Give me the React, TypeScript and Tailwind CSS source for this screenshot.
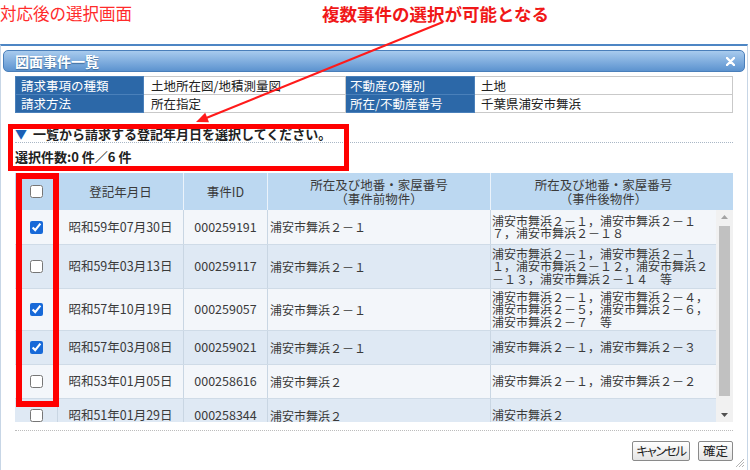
import React from "react";

const rows = [
  {
    checked: true,
    date: "昭和59年07月30日",
    id: "000259191",
    before: "浦安市舞浜２－１",
    after: ["浦安市舞浜２－１，浦安市舞浜２－１", "７，浦安市舞浜２－１８"],
    h: "h-[35px]",
    bg: "bg-[#f3f6fa]",
  },
  {
    checked: false,
    date: "昭和59年03月13日",
    id: "000259117",
    before: "浦安市舞浜２－１",
    after: [
      "浦安市舞浜２－１，浦安市舞浜２－１",
      "１，浦安市舞浜２－１２，浦安市舞浜２",
      "－１３，浦安市舞浜２－１４　等",
    ],
    h: "h-[44px]",
    bg: "bg-[#dfe9f4]",
  },
  {
    checked: true,
    date: "昭和57年10月19日",
    id: "000259057",
    before: "浦安市舞浜２－１",
    after: [
      "浦安市舞浜２－１，浦安市舞浜２－４，",
      "浦安市舞浜２－５，浦安市舞浜２－６，",
      "浦安市舞浜２－７　等",
    ],
    h: "h-[42px]",
    bg: "bg-[#f3f6fa]",
  },
  {
    checked: true,
    date: "昭和57年03月08日",
    id: "000259021",
    before: "浦安市舞浜２－１",
    after: ["浦安市舞浜２－１，浦安市舞浜２－３"],
    h: "h-[34px]",
    bg: "bg-[#dfe9f4]",
  },
  {
    checked: false,
    date: "昭和53年01月05日",
    id: "000258616",
    before: "浦安市舞浜２",
    after: ["浦安市舞浜２－１，浦安市舞浜２－２"],
    h: "h-[34px]",
    bg: "bg-[#f3f6fa]",
  },
  {
    checked: false,
    date: "昭和51年01月29日",
    id: "000258344",
    before: "浦安市舞浜２",
    after: ["浦安市舞浜２"],
    h: "h-[34px]",
    bg: "bg-[#dfe9f4]",
  },
];

const InfoTable = () => (
  <table className="mt-[4px] w-full border-collapse text-[12.5px] leading-[17px]">
    <tbody>
      <tr className="h-[18px]">
        <td className="w-[128px] border border-[#4a80ba] bg-[#2c68a8] p-0 pl-[5px] text-white">請求事項の種類</td>
        <td className="w-[202px] border border-[#c9c9c9] p-0 pl-[7px] text-[#222]">土地所在図/地積測量図</td>
        <td className="w-[129px] border border-[#4a80ba] bg-[#2c68a8] p-0 pl-[4px] text-white">不動産の種別</td>
        <td className="border border-[#c9c9c9] p-0 pl-[6px] text-[#222]">土地</td>
      </tr>
      <tr className="h-[18px]">
        <td className="border border-[#4a80ba] bg-[#2c68a8] p-0 pl-[5px] text-white">請求方法</td>
        <td className="border border-[#c9c9c9] p-0 pl-[7px] text-[#222]">所在指定</td>
        <td className="border border-[#4a80ba] bg-[#2c68a8] p-0 pl-[4px] text-white">所在/不動産番号</td>
        <td className="border border-[#c9c9c9] p-0 pl-[6px] text-[#222]">千葉県浦安市舞浜</td>
      </tr>
    </tbody>
  </table>
);

const Scrollbar = () => (
  <div className="flex w-[17px] flex-col items-center bg-[#f1f1f1]">
    <div className="flex h-[14px] items-center justify-center">
      <svg width="7" height="4" viewBox="0 0 7 4">
        <polygon points="0,4 7,4 3.5,0" fill="#a3a3a3" />
      </svg>
    </div>
    <div className="mt-[2px] h-[170px] w-[11px] bg-[#c1c1c1]" />
    <div className="flex-1" />
    <div className="flex h-[14px] items-center justify-center">
      <svg width="7" height="4" viewBox="0 0 7 4">
        <polygon points="0,0 7,0 3.5,4" fill="#505050" />
      </svg>
    </div>
  </div>
);

const CaseTable = () => (
  <div className="mt-[8px] w-[718px] text-[12px] text-[#3a3a3a]">
    <div className="flex h-[37px] bg-[#bcd8f1] text-[12.5px] leading-[14px] text-[#3a3a3a]">
      <div className="flex w-[43px] items-center justify-center border-r border-white/70">
        <input type="checkbox" readOnly className="h-[13px] w-[13px]" />
      </div>
      <div className="flex w-[126px] items-center justify-center border-r border-white/70">登記年月日</div>
      <div className="flex w-[84px] items-center justify-center border-r border-white/70">事件ID</div>
      <div className="flex w-[223px] flex-col items-center justify-center border-r border-white/70">
        <span>所在及び地番・家屋番号</span>
        <span>（事件前物件）</span>
      </div>
      <div className="flex w-[225px] flex-col items-center justify-center">
        <span>所在及び地番・家屋番号</span>
        <span>（事件後物件）</span>
      </div>
    </div>
    <div className="flex h-[212px]">
      <div className="w-[701px] overflow-hidden">
        {rows.map((r, i) => (
          <div key={i} className={`flex ${r.h} ${r.bg} border-b border-[#cfdbe7]`}>
            <div className="flex w-[43px] shrink-0 items-center justify-center border-r border-[#c9d6e3]">
              <input type="checkbox" readOnly defaultChecked={r.checked} className="h-[13px] w-[13px] accent-[#1769d8]" />
            </div>
            <div className="flex w-[126px] shrink-0 items-center justify-center border-r border-[#c9d6e3] text-[12.5px]">{r.date}</div>
            <div className="flex w-[84px] shrink-0 items-center justify-center border-r border-[#c9d6e3] text-[12.5px]">{r.id}</div>
            <div className="flex w-[223px] shrink-0 items-center border-r border-[#c9d6e3] pl-[2px]">{r.before}</div>
            <div className="flex w-[225px] shrink-0 flex-col justify-center overflow-hidden whitespace-nowrap pl-[1px] leading-[12.5px]">
              {r.after.map((line, j) => (
                <span key={j}>{line}</span>
              ))}
            </div>
          </div>
        ))}
      </div>
      <Scrollbar />
    </div>
  </div>
);

export default function App() {
  return (
    <div className="relative h-[470px] w-[750px] overflow-hidden bg-white font-['Noto_Sans_CJK_JP',sans-serif]">
      {/* annotation captions */}
      <div className="flex h-[44px] items-start pt-[3px]">
        <span className="w-[322px] text-[16.5px] leading-[20px] text-[#ff2b2b]">対応後の選択画面</span>
        <span className="text-[17.5px] font-bold leading-[22px] text-[#f01818]">複数事件の選択が可能となる</span>
      </div>

      {/* dialog */}
      <div className="relative h-[426px] w-[748px] border-x border-t-2 border-x-[#c7d6e6] border-t-[#4d86c4] px-[2px] pt-[4px]">
        <div className="flex h-[22px] items-center justify-between rounded-[5px] border border-[#4a7fba] bg-gradient-to-b from-[#a8cbee] to-[#5c93cf] pl-[11px] pr-[9px]">
          <span className="text-[14px] font-bold leading-[16px] text-white [text-shadow:0_1px_1px_#3b6a9c]">図面事件一覧</span>
          <svg width="9" height="9" viewBox="0 0 9 9">
            <path d="M1 1 L8 8 M8 1 L1 8" stroke="white" strokeWidth="2.4" strokeLinecap="round" />
          </svg>
        </div>

        <div className="px-[12px]">
          <InfoTable />

          <div className="mt-[12px] flex h-[18px] items-center border-b border-dotted border-[#a9b7c6] text-[13px] font-bold leading-[16px] text-[#222]">
            <span className="mr-[6px] text-[12px] text-[#1b5fb5]">▼</span>
            一覧から請求する登記年月日を選択してください。
          </div>
          <div className="mt-[6px] text-[13px] font-bold leading-[16px] text-[#222]">選択件数:0 件／6 件</div>

          <CaseTable />

          <div className="mt-[8px] border-t border-dotted border-[#bcbcbc]" />
          <div className="flex justify-end gap-[8px] pt-[10px]">
            <button className="h-[20px] w-[58px] whitespace-nowrap rounded-[2px] border border-[#8a8a8a] bg-gradient-to-b from-white to-[#e4e4e4] px-0 text-[12.5px] leading-[16px] tracking-[-1.5px] text-[#222] [font-feature-settings:'palt']">
              キャンセル
            </button>
            <button className="h-[20px] w-[35px] whitespace-nowrap rounded-[2px] border border-[#8a8a8a] bg-gradient-to-b from-white to-[#e4e4e4] px-0 text-[12.5px] leading-[16px] text-[#222]">
              確定
            </button>
          </div>
        </div>

        <svg className="absolute bottom-[2px] right-[2px]" width="10" height="10" viewBox="0 0 10 10">
          <path d="M9 1 L1 9 M9 4 L4 9 M9 7 L7 9" stroke="#b4b4b4" strokeWidth="1" />
        </svg>
      </div>

      {/* annotation overlays */}
      <div className="absolute left-[8px] top-[124px] h-[47px] w-[341px] border-[5px] border-[#ff0000]" />
      <div className="absolute left-[16px] top-[173px] h-[234px] w-[43px] border-[6px] border-[#ff0000]" />
      <svg className="absolute left-0 top-0" width="750" height="470">
        <line x1="443" y1="22" x2="205" y2="118.5" stroke="#ff1a1a" strokeWidth="2" />
        <polygon points="196,122 209,122.2 205.2,112.8" fill="#ff1a1a" />
      </svg>
    </div>
  );
}
